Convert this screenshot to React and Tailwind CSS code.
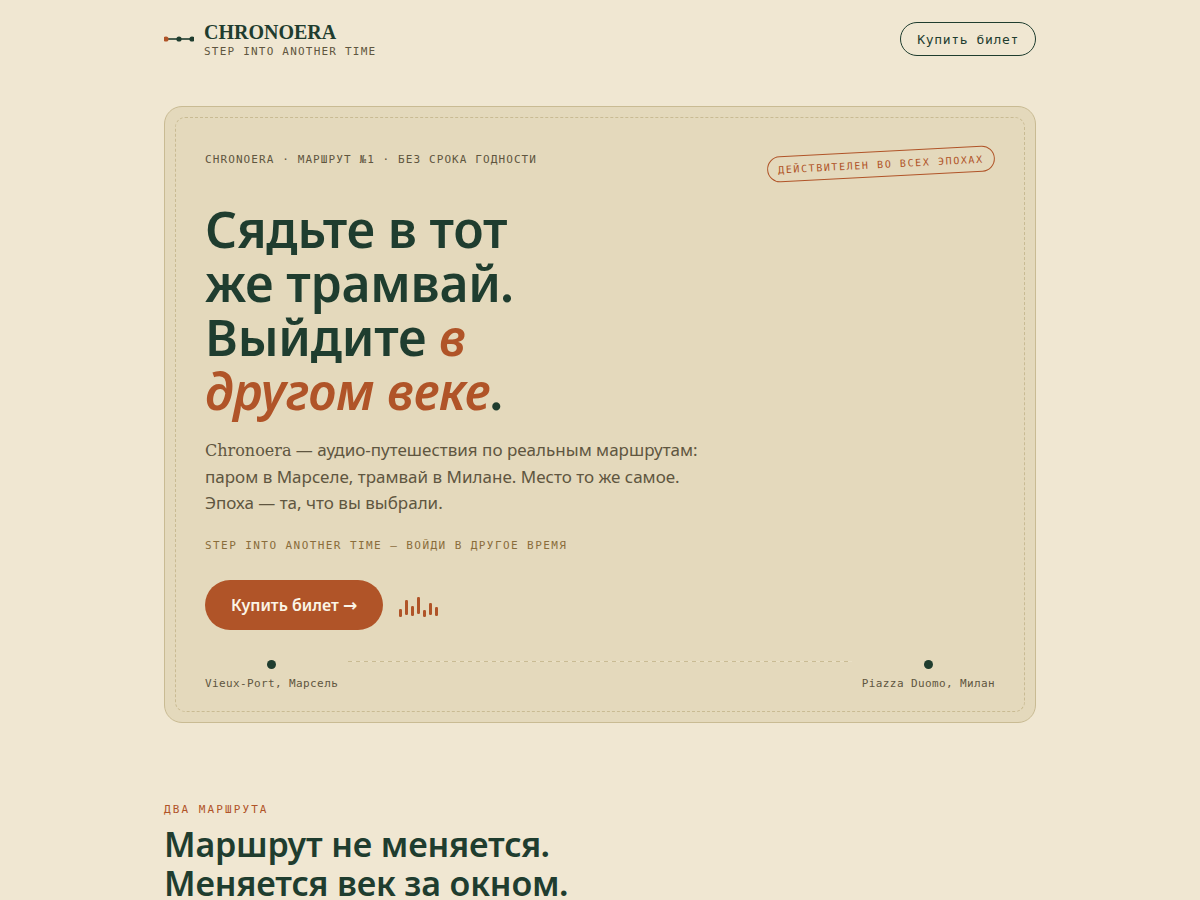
import React from 'react'

const bars = [
    { x: 0, y: 16, h: 8 },
    { x: 6, y: 7, h: 15 },
    { x: 12, y: 13, h: 10 },
    { x: 18, y: 4, h: 17 },
    { x: 24, y: 17, h: 7 },
    { x: 30, y: 10, h: 12 },
    { x: 36, y: 14, h: 9 },
]

function Logo() {
    return (
        <svg width="30" height="34" viewBox="0 0 30 34" aria-hidden="true">
            <path d="M2 17H28" stroke="#1f3d2f" strokeWidth="1.6" />
            <circle cx="2" cy="17" r="2.6" fill="#b05428" />
            <circle cx="15" cy="17" r="2.6" fill="#1f3d2f" />
            <circle cx="28" cy="17" r="2.6" fill="#1f3d2f" />
        </svg>
    )
}

function SoundBars() {
    return (
        <svg width="40" height="24" viewBox="0 0 40 24" fill="#b05428" aria-hidden="true">
            {bars.map((bar) => (
                <rect key={bar.x} x={bar.x} y={bar.y} width="3" height={bar.h} rx="1.2" />
            ))}
        </svg>
    )
}

// round full stop for the headings
function Dot() {
    return <span className="font-['Liberation_Serif',serif] leading-none font-bold">.</span>
}

function Stop({ name }) {
    return (
        <div className="flex flex-col items-center gap-1.5">
            <span className="size-[9px] rounded-full bg-[#1f3d2f]" />
            <span className="text-[11px] leading-[18px] tracking-[0.035em]">{name}</span>
        </div>
    )
}

function Header() {
    return (
        <header className="flex items-start justify-between pt-[22px]">
            <a href="#" className="flex items-start gap-2.5">
                <Logo />
                <span className="flex flex-col">
                    <span className="font-['Liberation_Serif',serif] text-[20px] leading-[20px] font-bold">
                        CHRONOERA
                    </span>
                    <span className="text-[11px] leading-[20px] tracking-[0.11em] text-[#5f5640]">
                        STEP INTO ANOTHER TIME
                    </span>
                </span>
            </a>
            <button
                type="button"
                className="h-[34px] rounded-full border border-[#1f3d2f] px-4 pt-0.5 text-[13px] tracking-[0.05em]"
            >
                Купить билет
            </button>
        </header>
    )
}

function Ticket() {
    return (
        <section className="relative mt-11 rounded-[18px] border border-[#c9bb93] bg-[#e4d9bc] px-10 pt-10 pb-[29px] text-[#5f5640]">
            <div className="pointer-events-none absolute inset-2.5 rounded-[10px] border border-dashed border-[#c9bb93]" />
            <div className="flex items-start justify-between">
                <p className="pt-1 text-[11px] leading-[18px] tracking-[0.1em]">
                    CHRONOERA · МАРШРУТ №1 · БЕЗ СРОКА ГОДНОСТИ
                </p>
                <span className="mt-1 -rotate-3 rounded-full border border-[#b05428] px-2.5 pt-[5px] pb-[3px] text-[10px] leading-[16px] tracking-[0.16em] text-[#b05428]">
                    ДЕЙСТВИТЕЛЕН ВО ВСЕХ ЭПОХАХ
                </span>
            </div>
            <h1 className="mt-[25px] max-w-[340px] font-['Noto_Sans',sans-serif] text-[50px] leading-[54px] font-semibold tracking-[-0.005em] text-[#1f3d2f]">
                Сядьте в тот же трамвай
                <Dot /> Выйдите <em className="text-[#b05428]">в другом веке</em>
                <Dot />
            </h1>
            <p className="mt-[19px] max-w-[500px] font-['Noto_Sans',sans-serif] text-[17px] leading-[26px]">
                <span className="font-['DejaVu_Serif',serif] text-[16px]">Chronoera</span> —
                аудио-путешествия по реальным маршрутам: паром в Марселе, трамвай в Милане. Место
                то же самое. Эпоха — та, что вы выбрали.
            </p>
            <p className="mt-[21px] text-[11px] leading-[18px] tracking-[0.13em] text-[#8a6d3b]">
                STEP INTO ANOTHER TIME — ВОЙДИ В ДРУГОЕ ВРЕМЯ
            </p>
            <div className="mt-[25px] flex items-center gap-4">
                <button
                    type="button"
                    className="h-[50px] rounded-full bg-[#b05428] px-[26px] pt-0.5 font-['Noto_Sans',sans-serif] text-[16px] font-semibold text-[#fbf5e6]"
                >
                    Купить билет{' '}
                    <span className="font-['DejaVu_Sans',sans-serif] text-[17px]">→</span>
                </button>
                <SoundBars />
            </div>
            <div className="mt-[30px] flex items-start gap-2.5">
                <Stop name="Vieux-Port, Марсель" />
                <span className="mt-px h-px flex-1 bg-[repeating-linear-gradient(90deg,#c9bb93_0_4px,#eae0c6_4px_8px)]" />
                <Stop name="Piazza Duomo, Милан" />
            </div>
        </section>
    )
}

export default function App() {
    return (
        <div className="min-h-screen bg-[#f0e7d2] font-['DejaVu_Sans_Mono',monospace] text-[#1f3d2f]">
            <div className="mx-auto max-w-[920px] px-6">
                <Header />
                <Ticket />
                <section className="pt-[78px]">
                    <p className="text-[11px] leading-[18px] tracking-[0.19em] text-[#b05428]">
                        ДВА МАРШРУТА
                    </p>
                    <h2 className="mt-1.5 max-w-[480px] font-['Noto_Sans',sans-serif] text-[34px] leading-[39px] font-semibold tracking-[-0.005em]">
                        Маршрут не меняется
                        <Dot /> Меняется век за окном
                        <Dot />
                    </h2>
                </section>
            </div>
        </div>
    )
}
